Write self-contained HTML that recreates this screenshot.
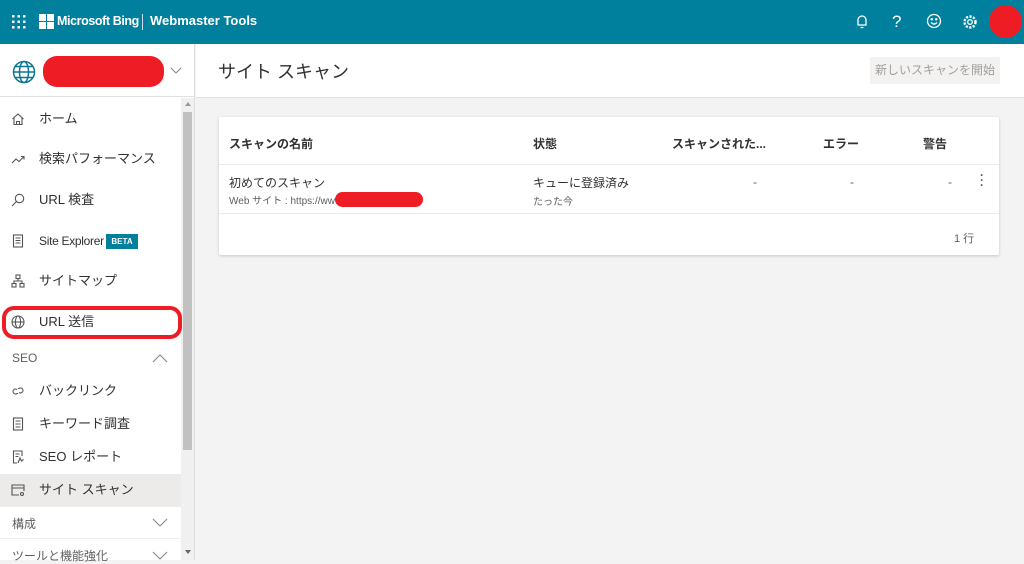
<!DOCTYPE html>
<html><head><meta charset="utf-8"><style>
*{margin:0;padding:0;box-sizing:border-box}
body{width:1024px;height:560px;overflow:hidden;font-family:"Liberation Sans","Noto Sans CJK JP",sans-serif;background:#f3f3f3;position:relative;color:#323130}
.top{position:absolute;left:0;top:0;width:1024px;height:44px;background:#00809d;color:#fff}
.abs{position:absolute}
.side{position:absolute;left:0;top:44px;width:195px;height:516px;background:#fff;border-right:1px solid #e1dfdd}
.hdr{position:absolute;left:196px;top:44px;width:828px;height:54px;background:#fff;border-bottom:1px solid #e1dfdd}
.item{position:absolute;left:0;width:181px;height:20px;font-size:13px;color:#323130}
.item svg{position:absolute;left:11px;top:3px}
.item span{position:absolute;left:39px;top:0;line-height:20px;white-space:nowrap}
.card{position:absolute;left:219px;top:117px;width:780px;height:138px;background:#fff;box-shadow:0 1px 3px rgba(0,0,0,.18);border-radius:2px}
.th{position:absolute;top:18px;font-size:12px;font-weight:bold;color:#323130}
.td{position:absolute;font-size:12px;color:#605e5c;white-space:nowrap}
</style></head><body>
<div class="top">
 <svg class="abs" style="left:12px;top:15px" width="14" height="14" fill="#fff"><g><rect x="0" y="0" width="2.5" height="2.5"/><rect x="5.5" y="0" width="2.5" height="2.5"/><rect x="11" y="0" width="2.5" height="2.5"/><rect x="0" y="5.5" width="2.5" height="2.5"/><rect x="5.5" y="5.5" width="2.5" height="2.5"/><rect x="11" y="5.5" width="2.5" height="2.5"/><rect x="0" y="11" width="2.5" height="2.5"/><rect x="5.5" y="11" width="2.5" height="2.5"/><rect x="11" y="11" width="2.5" height="2.5"/></g></svg>
 <svg class="abs" style="left:39px;top:14px" width="15" height="15" fill="#fff"><rect x="0" y="0" width="7" height="7"/><rect x="8" y="0" width="7" height="7"/><rect x="0" y="8" width="7" height="7"/><rect x="8" y="8" width="7" height="7"/></svg>
 <div class="abs" style="left:57px;top:14px;font-size:12.5px;font-weight:bold;letter-spacing:-0.4px">Microsoft Bing</div>
 <div class="abs" style="left:142px;top:14px;width:1px;height:16px;background:#cde"></div>
 <div class="abs" style="left:150px;top:13px;font-size:13px;font-weight:bold">Webmaster Tools</div>
 <svg class="abs" style="left:855px;top:14px" width="14" height="16" fill="none" stroke="#fff" stroke-width="1.3"><path d="M3 11V6a4 4 0 0 1 8 0v5H2.5h9"/><path d="M5.5 13.5h3"/></svg>
 <div class="abs" style="left:892px;top:12px;font-size:17px">?</div>
 <svg class="abs" style="left:926px;top:13px" width="16" height="16" fill="none" stroke="#fff" stroke-width="1.3"><circle cx="8" cy="8" r="6.5"/><path d="M5 9.5q3 3 6 0"/><circle cx="5.8" cy="6.2" r=".6" fill="#fff"/><circle cx="10.2" cy="6.2" r=".6" fill="#fff"/></svg>
 <svg class="abs" style="left:962px;top:14px" width="16" height="16" fill="none" stroke="#fff" stroke-width="1.3"><circle cx="8" cy="8" r="2.3"/><circle cx="8" cy="8" r="5.5" stroke-dasharray="2.2 1.4" stroke-width="2.4"/></svg>
 <div class="abs" style="left:989px;top:5px;width:33px;height:33px;border-radius:50%;background:#ee1c25"></div>
</div>
<div class="hdr">
 <div class="abs" style="left:22px;top:14px;font-size:18px;color:#323130">サイト スキャン</div>
 <div class="abs" style="left:674px;top:13px;width:130px;height:27px;background:#f3f2f1;border-radius:2px;font-size:12px;color:#a19f9d;text-align:center;line-height:27px">新しいスキャンを開始</div>
</div>
<div class="side">
 <div class="abs" style="left:0;top:0;width:194px;height:53px;border-bottom:1px solid #e1dfdd"></div>
 <svg class="abs" style="left:12px;top:16px" width="24" height="24" fill="none" stroke="#0e7490" stroke-width="1.5"><circle cx="12" cy="12" r="10.5"/><ellipse cx="12" cy="12" rx="4.5" ry="10.5"/><path d="M1.5 12h21M3.5 6.5h17M3.5 17.5h17"/></svg>
 <div class="abs" style="left:43px;top:12px;width:121px;height:31px;border-radius:14px;background:#ee1c25"></div>
 <svg class="abs" style="left:170px;top:23px" width="12" height="8" fill="none" stroke="#888" stroke-width="1.1"><path d="M1 1l5 5 5-5"/></svg>
 <div class="abs" style="left:181px;top:54px;width:13px;height:462px;background:#f0f0f0"></div>
 <div class="abs" style="left:183px;top:68px;width:9px;height:338px;background:#c1c1c1"></div>
 <div class="abs" style="left:185px;top:58px;border:3px solid transparent;border-bottom:4px solid #999;border-top:0"></div>
 <div class="abs" style="left:185px;top:506px;border:3px solid transparent;border-top:4px solid #666;border-bottom:0"></div>
 <div class="item" style="top:65px"><svg width="14" height="14" fill="none" stroke="#555" stroke-width="1.1"><path d="M1.5 7L7 2l5.5 5M3 6v6.5h8V6M5.5 12.5v-3h3v3"/></svg><span>ホーム</span></div>
 <div class="item" style="top:105px"><svg width="14" height="14" fill="none" stroke="#555" stroke-width="1.1"><path d="M1 11l4-4 3 2.5 5-5M10 4.5h3v3"/></svg><span>検索パフォーマンス</span></div>
 <div class="item" style="top:146px"><svg width="14" height="14" fill="none" stroke="#555" stroke-width="1.1"><circle cx="8.5" cy="5.5" r="4.2"/><path d="M5.5 8.5L1 13"/></svg><span>URL 検査</span></div>
 <div class="item" style="top:187px"><svg width="14" height="14" fill="none" stroke="#555" stroke-width="1.1"><rect x="2.5" y="1" width="9" height="12"/><path d="M4.5 4h5M4.5 6.5h5M4.5 9h5"/></svg><span style="font-size:12px;letter-spacing:-0.3px">Site Explorer</span><div class="abs" style="left:106px;top:3px;width:32px;height:15px;background:#00809d;color:#fff;font-size:8px;font-weight:bold;text-align:center;line-height:15px">BETA</div></div>
 <div class="item" style="top:227px"><svg width="14" height="14" fill="none" stroke="#555" stroke-width="1.1"><rect x="5" y="1" width="4" height="3.5"/><rect x="1" y="9.5" width="4" height="3.5"/><rect x="9" y="9.5" width="4" height="3.5"/><path d="M7 4.5v2.5M3 9.5V7h8v2.5"/></svg><span>サイトマップ</span></div>
 <div class="item" style="top:268px"><svg width="14" height="14" fill="none" stroke="#555" stroke-width="1.1"><circle cx="7" cy="7" r="6"/><ellipse cx="7" cy="7" rx="2.6" ry="6"/><path d="M1 7h12"/></svg><span>URL 送信</span></div>
 <div class="abs" style="left:2px;top:262px;width:180px;height:33px;border:4px solid #ee1c25;border-radius:12px"></div>
 <div class="abs" style="left:12px;top:307px;font-size:12px;color:#605e5c">SEO</div>
 <svg class="abs" style="left:152px;top:310px" width="16" height="9" fill="none" stroke="#888" stroke-width="1.1"><path d="M1 8l7-7 7 7"/></svg>
 <div class="item" style="top:337px"><svg width="14" height="14" fill="none" stroke="#555" stroke-width="1.1"><path d="M6 5.5a2.5 2.5 0 1 0 0 4h1M8 8.5a2.5 2.5 0 1 0 0-4H7"/></svg><span>バックリンク</span></div>
 <div class="item" style="top:370px"><svg width="14" height="14" fill="none" stroke="#555" stroke-width="1.1"><rect x="2.5" y="1" width="9" height="12"/><path d="M4.5 4h5M4.5 7h5M4.5 10h5"/></svg><span>キーワード調査</span></div>
 <div class="item" style="top:403px"><svg width="14" height="14" fill="none" stroke="#555" stroke-width="1.1"><path d="M11 6V1H2.5v12H6M4.5 4h4M4.5 6.5h3"/><path d="M7 13l2-5 1.5 3 2-1.5"/></svg><span>SEO レポート</span></div>
 <div class="abs" style="left:0;top:430px;width:181px;height:32px;background:#edebe9"></div>
 <div class="item" style="top:436px"><svg width="14" height="14" fill="none" stroke="#555" stroke-width="1.1"><path d="M13 8V2H1v10h7M1 5h12"/><circle cx="11" cy="11" r="1.5"/></svg><span>サイト スキャン</span></div>
 <div class="abs" style="left:0;top:462px;width:181px;height:1px;background:#eee"></div>
 <div class="abs" style="left:12px;top:471px;font-size:12px;color:#605e5c">構成</div>
 <svg class="abs" style="left:152px;top:474px" width="16" height="9" fill="none" stroke="#888" stroke-width="1.1"><path d="M1 1l7 7 7-7"/></svg>
 <div class="abs" style="left:0;top:494px;width:181px;height:1px;background:#eee"></div>
 <div class="abs" style="left:12px;top:503px;font-size:12px;color:#605e5c">ツールと機能強化</div>
 <svg class="abs" style="left:152px;top:507px" width="16" height="9" fill="none" stroke="#888" stroke-width="1.1"><path d="M1 1l7 7 7-7"/></svg>
</div>
<div class="card">
 <div class="th" style="left:10px">スキャンの名前</div>
 <div class="th" style="left:314px">状態</div>
 <div class="th" style="left:453px">スキャンされた...</div>
 <div class="th" style="left:604px">エラー</div>
 <div class="th" style="left:704px">警告</div>
 <div class="abs" style="left:0;top:47px;width:780px;height:1px;background:#edebe9"></div>
 <div class="td" style="left:10px;top:57px;color:#323130">初めてのスキャン</div>
 <div class="td" style="left:10px;top:75px;font-size:10px">Web サイト : https://www.</div>
 <div class="abs" style="left:116px;top:75px;width:88px;height:15px;border-radius:8px;background:#ee1c25"></div>
 <div class="td" style="left:314px;top:57px;color:#323130">キューに登録済み</div>
 <div class="td" style="left:314px;top:76px;font-size:10px">たった今</div>
 <div class="td" style="left:534px;top:58px">-</div>
 <div class="td" style="left:631px;top:58px">-</div>
 <div class="td" style="left:729px;top:58px">-</div>
 <div class="td" style="left:761px;top:56px;font-weight:bold;line-height:5px">·<br>·<br>·</div>
 <div class="abs" style="left:0;top:96px;width:780px;height:1px;background:#edebe9"></div>
 <div class="td" style="left:735px;top:113px;font-size:11px">1 行</div>
</div>
</body></html>
